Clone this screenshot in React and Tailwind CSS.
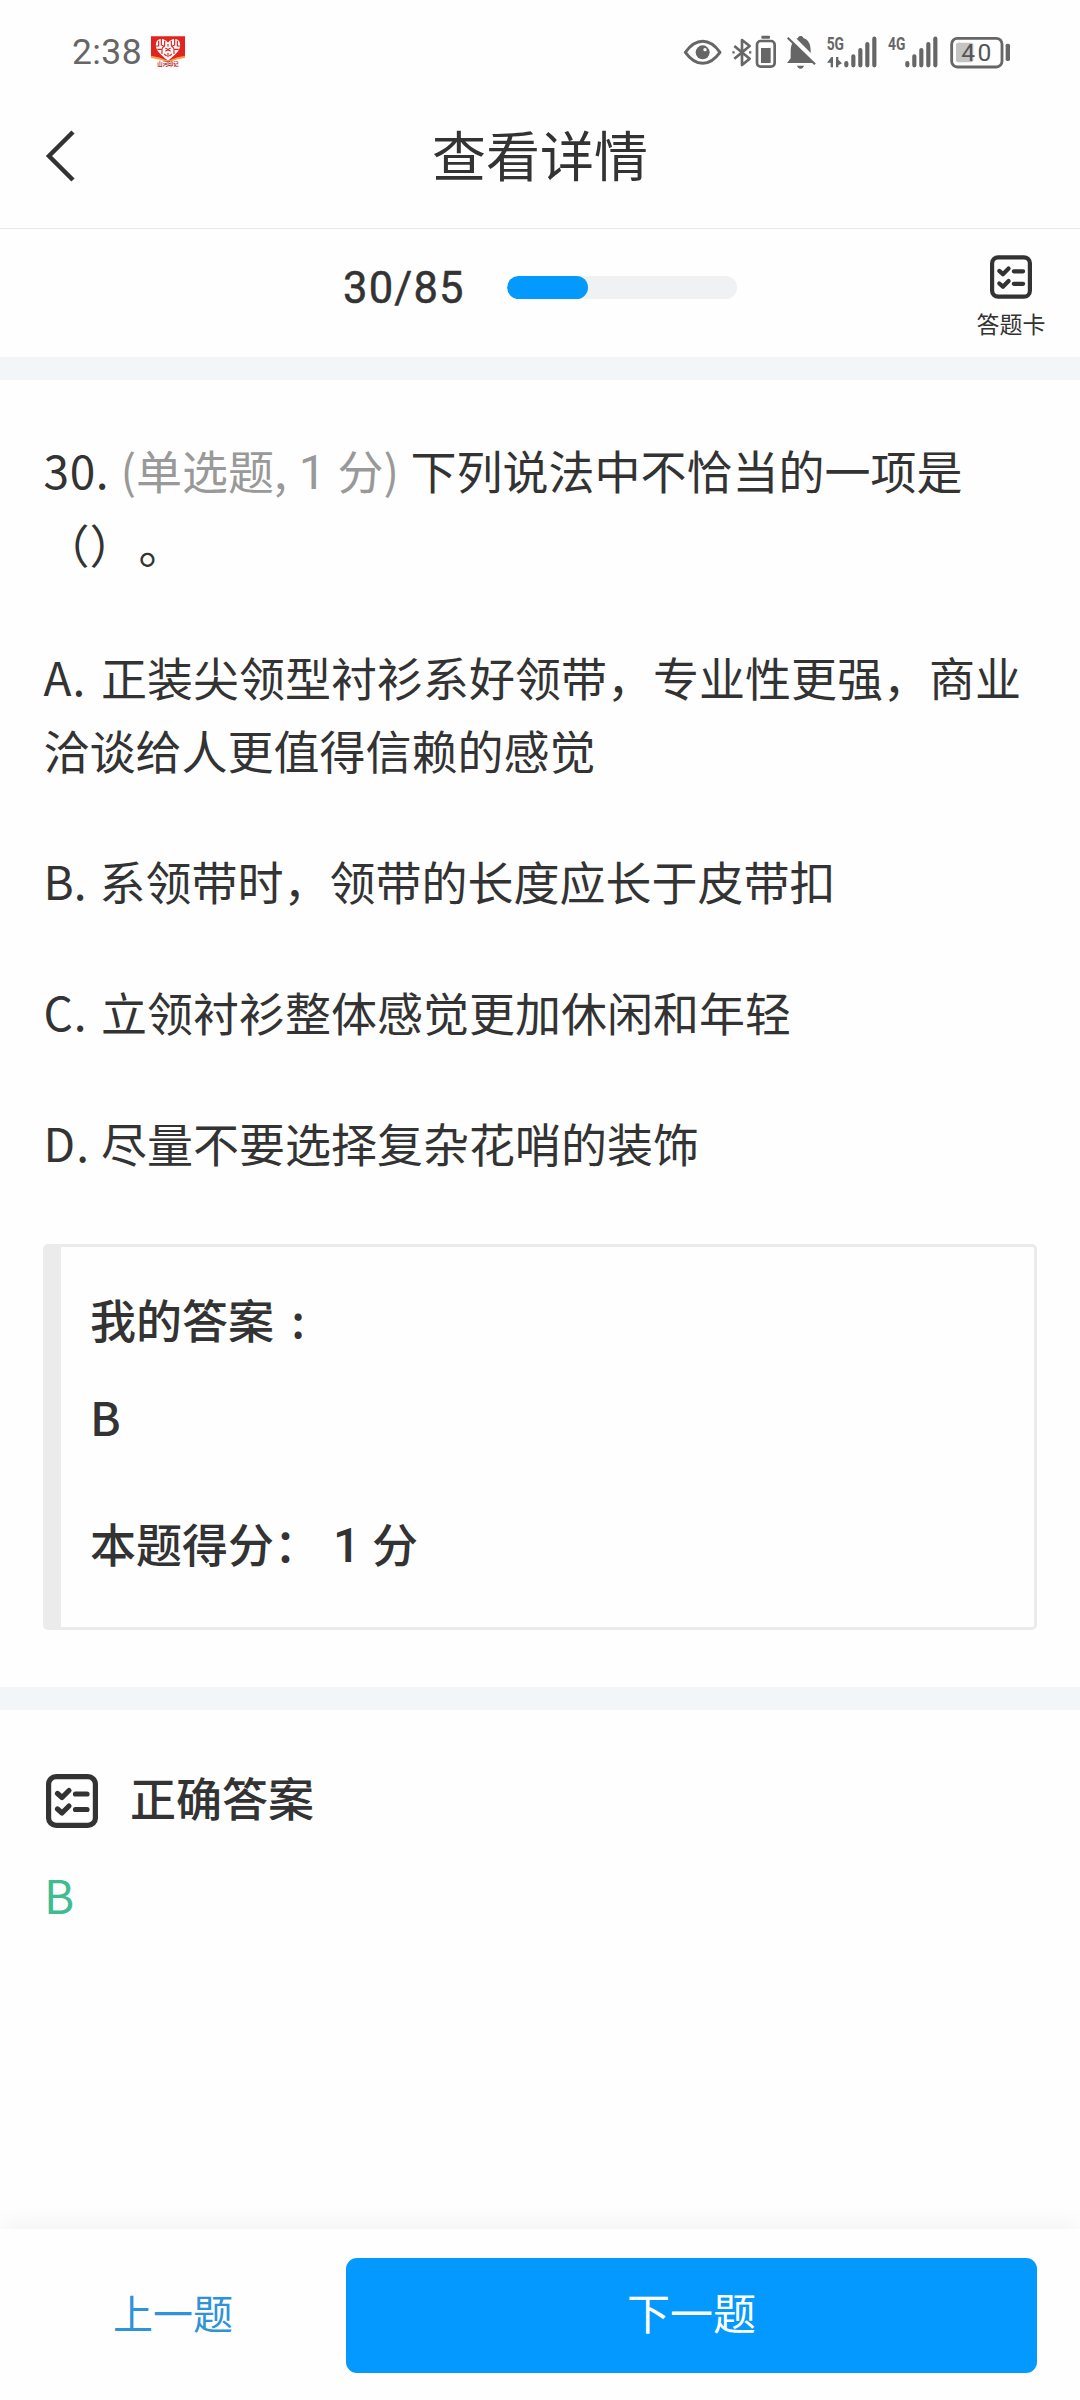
import React from 'react';

const question = {
  index: 30,
  total: 85,
  options: [
    { key: 'A', lines: ['正装尖领型衬衫系好领带，专业性更强，商业', '洽谈给人更值得信赖的感觉'] },
    { key: 'B', lines: ['系领带时，领带的长度应长于皮带扣'] },
    { key: 'C', lines: ['立领衬衫整体感觉更加休闲和年轻'] },
    { key: 'D', lines: ['尽量不要选择复杂花哨的装饰'] },
  ],
};

function CardIcon({ className }) {
  return (
    <svg className={className} viewBox="0 0 52 54" fill="none" stroke="#333" strokeLinecap="round" strokeLinejoin="round">
      <rect x="2.6" y="2.6" width="46.8" height="48.8" rx="7.5" strokeWidth="5.2" />
      <path d="M11.500 19.500l4.500 4 7-7M11.500 35l4.500 4 7-7" strokeWidth="5.200" />
      <path d="M29.500 20h11.500M29.500 35.500h11.500" strokeWidth="5.200" />
    </svg>
  );
}

function AppBadge() {
  return (
    <svg className="w-[36px] h-[32px]" viewBox="0 0 108 96">
      <path d="M3 1h102v60q-22 5-51 15Q25 66 3 61z" fill="#e2231f" />
      <path d="M3 59q24 3 51 15 27-12 51-15v7q-22 3-51 13Q25 69 3 66z" fill="#f6a04c" />
      <path
        d="M54 20C44 6 22 5 18 22c-4 20 14 34 36 52 22-18 40-32 36-52C86 5 64 6 54 20z"
        fill="#fff"
      />
      <path
        d="M26 14v16h-8M34 9v18l10 5M22 40h14v14M44 14v14l-8 10M54 24v8M64 14v14l8 10M82 14v16h8M74 9v18l-10 5M86 40H72v14M46 36l16 10M62 36L46 46M54 50v14M42 54l8 6M66 54l-8 6"
        fill="none"
        stroke="#e2231f"
        strokeWidth="3.500"
      />
      <text x="54" y="91" fontSize="16" fontWeight="700" fill="#b3191c" textAnchor="middle" fontFamily="Noto Sans CJK SC">
        山河印记
      </text>
    </svg>
  );
}

// status icons share a 3x grid, every viewBox is cut out of the same strip
function StatusIcons() {
  return (
    <div className="flex items-center text-[#666]">
      <svg className="w-[40px] h-[36px]" viewBox="68 72 120 108" fill="none">
        <path d="M75 127q24-33 52-33t52 33q-24 33-52 33T75 127z" stroke="currentColor" strokeWidth="9" strokeLinejoin="round" />
        <circle cx="127" cy="127" r="21" fill="currentColor" />
        <circle cx="134" cy="119" r="5" fill="#fefefe" />
      </svg>
      <svg className="ml-[9px] w-[44px] h-[36px]" viewBox="215 72 132 108" fill="none">
        <path d="M222 108l46 38-23 19V90l23 18-46 38" stroke="currentColor" strokeWidth="8" strokeLinejoin="round" />
        <path d="M216 127h7M266 127h7" stroke="currentColor" strokeWidth="7" />
        <rect x="290" y="93" width="53" height="77" rx="11" stroke="currentColor" strokeWidth="8" />
        <rect x="303" y="77" width="26" height="9" rx="3" fill="currentColor" />
        <rect x="302" y="114" width="29" height="45" fill="currentColor" />
      </svg>
      <svg className="ml-[10px] w-[32px] h-[36px]" viewBox="377 72 96 108">
        <path
          d="M380 159l11-14v-20c0-22 8-36 22-41 2-8 14-8 16 0 14 4 22 17 22 37v24l10 14z"
          fill="currentColor"
        />
        <path d="M410 167h21q-3 9-10.500 9t-10.500-9z" fill="currentColor" />
        <path d="M388 76l82 82" stroke="#fefefe" strokeWidth="15" />
        <path d="M382 83l82 80" stroke="currentColor" strokeWidth="6.500" />
      </svg>
      <svg className="ml-[8px] w-[52px] h-[36px]" viewBox="497 72 156 108">
        <text x="499" y="121" fontSize="55" fontWeight="700" fill="currentColor" textLength="52" lengthAdjust="spacingAndGlyphs" fontFamily="Roboto">
          5G
        </text>
        <path d="M500 158l13-17h5v31h-7v-14zM527 141h7v8l11 11-11 6v6h-7z" fill="currentColor" />
        <path d="M558 159v7M579 139v27M600 120v46M621 102v64M642 86v80" stroke="currentColor" strokeWidth="12.500" strokeLinecap="round" />
      </svg>
      <svg className="ml-[9px] w-[52px] h-[36px]" viewBox="680 72 156 108">
        <text x="683" y="121" fontSize="55" fontWeight="700" fill="currentColor" textLength="52" lengthAdjust="spacingAndGlyphs" fontFamily="Roboto">
          4G
        </text>
        <path d="M741 159v7M762 139v27M783 120v46M804 102v64M825 86v80" stroke="currentColor" strokeWidth="12.500" strokeLinecap="round" />
      </svg>
      <svg className="ml-[10px] w-[62px] h-[36px]" viewBox="866 72 186 108">
        <rect x="874" y="85" width="151" height="86" rx="17" fill="none" stroke="currentColor" strokeWidth="8.500" />
        <rect x="887" y="98" width="52" height="59" rx="6" fill="#c4c4c4" />
        <rect x="1036" y="101" width="13" height="52" rx="5" fill="currentColor" />
        <text x="903" y="153" fontSize="74" fill="#555" textLength="90" fontFamily="Roboto">
          40
        </text>
      </svg>
    </div>
  );
}

export default function App() {
  return (
    <div className="flex h-[2400px] w-[1080px] flex-col overflow-hidden bg-[#fefefe] text-[46px] leading-[73.5px] text-[#333] [font-family:'Noto_Sans_CJK_SC',sans-serif] [text-spacing-trim:space-all]">
      {/* Status bar */}
      <div className="flex h-[104px] shrink-0 items-center justify-between pl-[72px] pr-[69px]">
        <div className="flex items-center gap-[9px]">
          <span className="w-[69px] pt-[2px] text-[35.500px] leading-none tracking-[0.4px] text-[#666] [font-family:Roboto,sans-serif]">2:38</span>
          <AppBadge />
        </div>
        <StatusIcons />
      </div>

      {/* Title bar */}
      <header className="grid h-[125px] shrink-0 grid-cols-[120px_1fr_120px] items-center border-b border-[#e8e9ea] pb-[24px]">
        <svg className="ml-[45px] mt-[4px] h-[52px] w-[30px]" viewBox="0 0 30 52" fill="none">
          <path d="M28 2L4 26l24 24" stroke="#333" strokeWidth="4.500" />
        </svg>
        <h1 className="text-center text-[54px] leading-none">查看详情</h1>
      </header>

      {/* Progress */}
      <div className="flex h-[128px] shrink-0 items-center">
        <div className="ml-[343px] flex w-[599px] items-center pb-[12px]">
          <span className="w-[164px] pt-[3px] text-[43.500px] leading-none tracking-[1.200px] [font-family:Roboto,sans-serif] [-webkit-text-stroke:0.5px_#333]">
            {question.index}/{question.total}
          </span>
          <div className="h-[23px] w-[230px] overflow-hidden rounded-full bg-[#eff1f2]">
            <div className="h-full rounded-full bg-[#0499ff]" style={{ width: `${(question.index / question.total) * 100}%` }} />
          </div>
        </div>
        <div className="flex w-[138px] flex-col items-center gap-[11px] pt-[4px]">
          <CardIcon className="h-[44px] w-[42px]" />
          <span className="text-[23px] leading-[26px]">答题卡</span>
        </div>
      </div>
      <div className="h-[23px] shrink-0 bg-[#f3f6f8]" />

      {/* Question */}
      <section className="flex shrink-0 flex-col gap-[57.500px] whitespace-nowrap px-[43.500px] pt-[53px]">
        <div className="mb-[2px]">
          <span className="inline-block w-[77px] tracking-[0.600px]">{question.index}.</span>
          <span className="inline-block w-[290px] text-[#999] [word-spacing:1.500px]">
            (单选题, <span className="text-[48px] leading-none [font-family:Roboto]">1</span> 分)
          </span>
          下列说法中不恰当的一项是
          <br />
          （）<span className="ml-[3px]">。</span>
        </div>
        {question.options.map((option) => (
          <div key={option.key}>
            <span className={option.key === 'B' ? 'inline-block w-[56px]' : 'inline-block w-[57.500px] tracking-[1px]'}>
              {option.key}.
            </span>
            {option.lines.map((line, i) => (
              <React.Fragment key={line}>
                {i > 0 && <br />}
                {line}
              </React.Fragment>
            ))}
          </div>
        ))}
      </section>

      {/* My answer */}
      <section className="mx-[43px] mt-[64px] flex h-[386px] shrink-0 flex-col rounded-[5px] border-[3px] border-l-[18px] border-[#ebebeb] pl-[29px] pt-[35px] font-medium">
        <div className="[word-spacing:7px]">我的答案 :</div>
        <div className="mt-[25px]">B</div>
        <div className="mt-[52px] flex items-baseline">
          <span className="w-[243px]">本题得分：</span>
          <span className="w-[39px] text-[48px] leading-none [font-family:Roboto]">1</span>
          <span>分</span>
        </div>
      </section>
      <div className="mt-[57px] h-[23px] shrink-0 bg-[#f3f6f8]" />

      {/* Correct answer */}
      <section className="flex grow flex-col px-[45px] pt-[50px]">
        <div className="flex items-center font-medium">
          <CardIcon className="mt-[9px] h-[54px] w-[54px]" />
          <span className="ml-[31px]">正确答案</span>
        </div>
        <div className="-ml-px mt-[25px] text-[#40bd90]">B</div>
      </section>

      {/* Footer */}
      <footer className="flex h-[171px] shrink-0 items-start bg-[#fefefe] pt-[29px] shadow-[0_-4px_24px_rgba(0,0,0,0.05)]">
        <button className="h-[109px] w-[346px] text-[40px] text-[#2e93d9]">上一题</button>
        <button className="h-[115px] w-[691px] rounded-[11px] bg-[#0499ff] pb-[7px] text-[43px] text-white">下一题</button>
      </footer>
    </div>
  );
}
